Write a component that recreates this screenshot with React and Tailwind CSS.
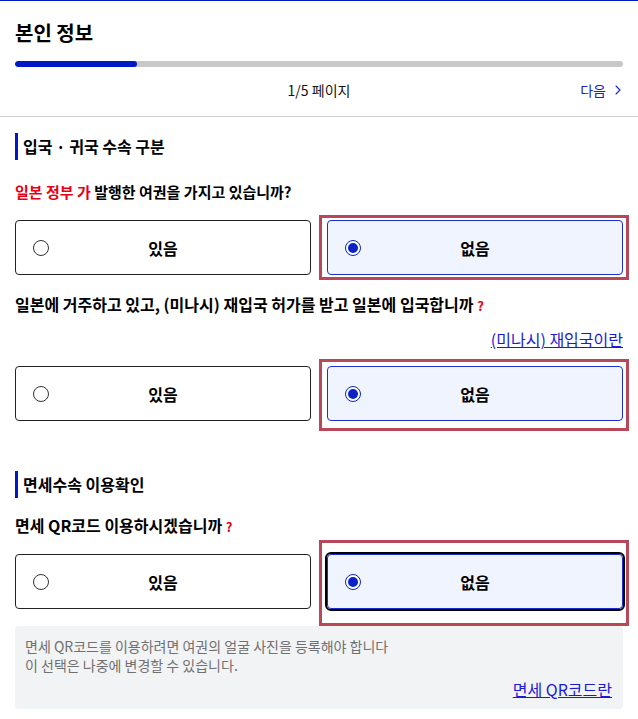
import React, { useState } from "react";
import { ChevronRight } from "lucide-react";

const font = { fontFamily: '"Noto Sans CJK KR", "Noto Sans", sans-serif' };

function Radio({ checked }) {
  return checked ? (
    <span className="w-4 h-4 rounded-full border-[1.5px] border-[#0a22c8] flex items-center justify-center bg-white">
      <span className="w-[10px] h-[10px] rounded-full bg-[#0a22c8]" />
    </span>
  ) : (
    <span className="w-4 h-4 rounded-full border-[1.5px] border-[#333] bg-white" />
  );
}

function Option({ label, checked, focused, mark, onClick }) {
  return (
    <div className="relative">
      {checked && <div className={`absolute border-[3px] border-[#b8475a] pointer-events-none ${mark}`} />}
      <button
        onClick={onClick}
        className={`w-full h-[55px] rounded-[4px] grid grid-cols-[16px_1fr_16px] items-center px-[17px] ${
          checked ? "bg-[#eff4ff] border border-[#1b2fd1]" : "bg-white border border-[#222]"
        } ${focused ? "outline-2 outline-black" : ""}`}
      >
        <Radio checked={checked} />
        <span className="text-[16px] font-bold text-black text-center">{label}</span>
        <span />
      </button>
    </div>
  );
}

function Choice({ value, setValue, focused, mark }) {
  return (
    <div className="grid grid-cols-2 gap-4">
      <Option label="있음" checked={value === "yes"} mark={mark} onClick={() => setValue("yes")} />
      <Option label="없음" checked={value === "no"} focused={focused} mark={mark} onClick={() => setValue("no")} />
    </div>
  );
}

function SectionTitle({ children }) {
  return (
    <div className="flex items-center gap-[5px]">
      <span className="w-[3px] h-[27px] bg-[#0019c8]" />
      <h2 className="text-[16px] font-bold text-black leading-[27px]">{children}</h2>
    </div>
  );
}

export default function App() {
  const [q1, setQ1] = useState("no");
  const [q2, setQ2] = useState("no");
  const [q3, setQ3] = useState("no");

  return (
    <div className="w-full min-h-[719px] bg-white border-t border-[#0019c8] text-black" style={font}>
      {/* 헤더 */}
      <div className="px-[15px] pt-[19px] pb-[15px] border-b border-[#cfcfcf]">
        <h1 className="text-[20px] font-bold leading-[26px]">본인 정보</h1>
        <div className="mt-[15px] h-[6px] rounded-full bg-[#c8c8c8] overflow-hidden">
          <div className="h-full w-[20%] rounded-full bg-[#0019c8]" />
        </div>
        <div className="mt-[12px] h-[22px] relative flex items-center justify-center">
          <span className="text-[14px] text-[#111]">1/5 페이지</span>
          <button className="absolute right-0 flex items-center gap-[4px] text-[14px] text-[#1a22cc]">
            다음
            <ChevronRight size={16} strokeWidth={1.6} className="text-[#1a22cc] -mr-[3px]" />
          </button>
        </div>
      </div>

      <div className="px-[15px]">
        {/* 입국 · 귀국 */}
        <div className="mt-[16px]">
          <SectionTitle>입국 · 귀국 수속 구분</SectionTitle>
        </div>
        <p className="mt-[21px] text-[15px] font-bold leading-[22px]">
          <span className="text-[#e60012]">일본 정부 가</span> 발행한 여권을 가지고 있습니까?
        </p>
        <div className="mt-[17px]">
          <Choice value={q1} setValue={setQ1} mark="-left-[8px] -right-[6px] -top-[5px] -bottom-[5px]" />
        </div>

        <p className="mt-[18px] text-[16px] font-bold leading-[22px]">
          일본에 거주하고 있고, (미나시) 재입국 허가를 받고 일본에 입국합니까{" "}
          <span className="text-[#e60012] text-[13px]">?</span>
        </p>
        <div className="mt-[11px] flex justify-end">
          <a href="#" className="text-[16px] text-[#1a1ad6] underline leading-[22px]">
            (미나시) 재입국이란
          </a>
        </div>
        <div className="mt-[16px]">
          <Choice value={q2} setValue={setQ2} mark="-left-[8px] -right-[6px] -top-[7px] -bottom-[10px]" />
        </div>

        {/* 면세 */}
        <div className="mt-[50px]">
          <SectionTitle>면세수속 이용확인</SectionTitle>
        </div>
        <p className="mt-[16px] text-[16px] font-bold leading-[22px]">
          면세 QR코드 이용하시겠습니까 <span className="text-[#e60012] text-[13px]">?</span>
        </p>
        <div className="mt-[16px]">
          <Choice value={q3} setValue={setQ3} focused mark="-left-[8px] -right-[6px] -top-[14px] -bottom-[17px]" />
        </div>

        <div className="mt-[17px] rounded-[4px] bg-[#f2f3f5] px-[10px] pt-[11px] pb-[9px]">
          <p className="text-[14px] leading-[19px] text-[#707070]">
            면세 QR코드를 이용하려면 여권의 얼굴 사진을 등록해야 합니다
            <br />이 선택은 나중에 변경할 수 있습니다.
          </p>
          <div className="mt-[3px] flex justify-end pr-[1px]">
            <a href="#" className="text-[16px] text-[#1a1ad6] underline leading-[22px]">
              면세 QR코드란
            </a>
          </div>
        </div>
      </div>
    </div>
  );
}
